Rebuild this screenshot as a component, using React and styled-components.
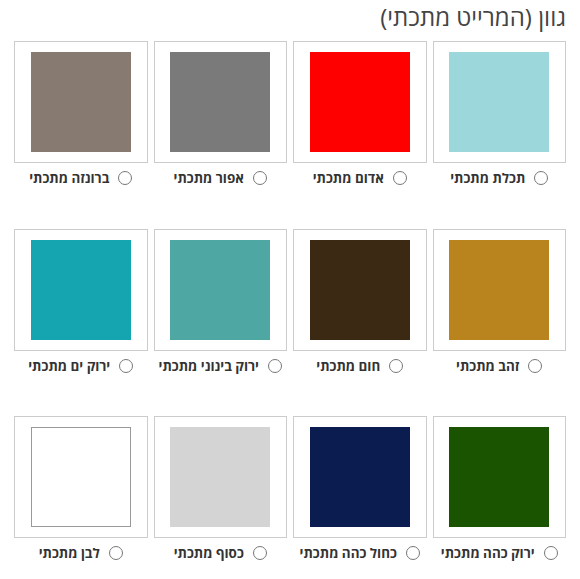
import React from 'react';
import styled, { createGlobalStyle } from 'styled-components';

const GlobalStyle = createGlobalStyle`
  body {
    margin: 0;
    background: #fff;
    font-family: "Open Sans", "DejaVu Sans", sans-serif;
  }
`

const Page = styled.div`
  direction: rtl;
  width: 552px;
  padding: 0 14px;
`

const Title = styled.h2`
  margin: 0;
  height: 41px;
  font-size: 24px;
  font-weight: 400;
  line-height: 33px;
  color: #444;
`

const Grid = styled.div`
  display: grid;
  grid-template-columns: repeat(4, 1fr);
  column-gap: 6px;
  row-gap: 0;
`

const Card = styled.label`
  display: flex;
  flex-direction: column;
  align-items: stretch;
  height: 187.5px;
  cursor: pointer;
`

const Frame = styled.div`
  display: flex;
  justify-content: center;
  padding: 10px 0;
  border: 1px solid #ccc;
`

const Swatch = styled.div`
  width: 100px;
  height: 100px;
  box-sizing: border-box;
  background: ${p => p.color};
  border: ${p => p.outlined ? '1px solid #999' : 'none'};
`

const Caption = styled.div`
  display: flex;
  justify-content: center;
  align-items: center;
  gap: 9px;
  margin-top: 6px;
  height: 18px;
`

const Radio = styled.input.attrs({ type: 'radio' })`
  appearance: none;
  margin: 0;
  width: 14px;
  height: 14px;
  border: 1px solid #777;
  border-radius: 50%;
  background: #fff;
`

const Name = styled.span`
  font-size: 13.4px;
  font-weight: 700;
  color: #333;
`

const colors = [
  { name: 'תכלת מתכתי', hex: '#9bd7db' },
  { name: 'אדום מתכתי', hex: '#ff0000' },
  { name: 'אפור מתכתי', hex: '#7a7a7a' },
  { name: 'ברונזה מתכתי', hex: '#877a70' },
  { name: 'זהב מתכתי', hex: '#b9841e' },
  { name: 'חום מתכתי', hex: '#3b2914' },
  { name: 'ירוק בינוני מתכתי', hex: '#4fa7a3' },
  { name: 'ירוק ים מתכתי', hex: '#15a5b0' },
  { name: 'ירוק כהה מתכתי', hex: '#1a5400' },
  { name: 'כחול כהה מתכתי', hex: '#0b1d50' },
  { name: 'כסוף מתכתי', hex: '#d4d4d4' },
  { name: 'לבן מתכתי', hex: '#ffffff', outlined: true }
]

export default function App() {
  return (
    <Page>
      <GlobalStyle />
      <Title>גוון (המרייט מתכתי)</Title>
      <Grid>
        { colors.map(c =>
          <Card key={ c.name }>
            <Frame>
              <Swatch color={ c.hex } outlined={ c.outlined } />
            </Frame>
            <Caption>
              <Radio name="color" value={ c.name } />
              <Name>{ c.name }</Name>
            </Caption>
          </Card>
        ) }
      </Grid>
    </Page>
  )
}
